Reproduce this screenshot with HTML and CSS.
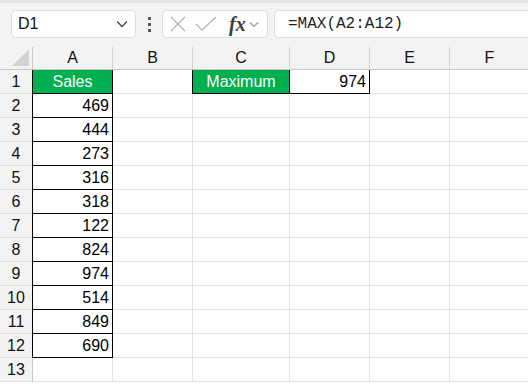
FILE: index.html
```html
<!DOCTYPE html>
<html lang="en">
<head>
    <meta charset="UTF-8">
    <title>Excel - MAX</title>
    <link rel="stylesheet" href="styles.css">
</head>
<body>
    <div class="toolbar">
        <div class="name-box">
            <span>D1</span>
            <svg width="12" height="8" viewBox="0 0 12 8"><path d="M1 1.5 L6 6.5 L11 1.5" fill="none" stroke="#444" stroke-width="1.3"/></svg>
        </div>
        <div class="dots"><i></i><i></i><i></i></div>
        <div class="fx-box">
            <svg width="18" height="18" viewBox="0 0 18 18"><path d="M2 2 L16 16 M16 2 L2 16" stroke="#b4b4b4" stroke-width="1.3"/></svg>
            <svg width="22" height="18" viewBox="0 0 22 18"><path d="M1 9 L7 15 L21 2" fill="none" stroke="#b4b4b4" stroke-width="1.3"/></svg>
            <span class="fx">fx</span>
            <svg width="10" height="7" viewBox="0 0 10 7"><path d="M1 1.5 L5 5.5 L9 1.5" fill="none" stroke="#999" stroke-width="1.2"/></svg>
        </div>
        <div class="formula-box">=MAX(A2:A12)</div>
    </div>

    <div class="sheet">
        <div class="corner"><span class="tri"></span></div>
        <div class="col-head">A</div>
        <div class="col-head">B</div>
        <div class="col-head">C</div>
        <div class="col-head">D</div>
        <div class="col-head">E</div>
        <div class="col-head">F</div>

        <div class="row-head">1</div>
        <div class="cell box head-cell">Sales</div>
        <div class="cell"></div>
        <div class="cell box head-cell">Maximum</div>
        <div class="cell box num">974</div>
        <div class="cell"></div>
        <div class="cell"></div>
    </div>

    <script>
        // rows 2-13
        const sales = [469, 444, 273, 316, 318, 122, 824, 974, 514, 849, 690, null];
        const sheet = document.querySelector('.sheet');
        sales.forEach((v, i) => {
            let html = `<div class="row-head">${i + 2}</div>`;
            html += v === null ? '<div class="cell"></div>' : `<div class="cell box num">${v}</div>`;
            for (let c = 0; c < 5; c++) html += '<div class="cell"></div>';
            sheet.insertAdjacentHTML('beforeend', html);
        });
    </script>
</body>
</html>
```

FILE: styles.css
```css
body {
    margin: 0;
    background: #ffffff;
    font-family: "Liberation Sans", Arial, sans-serif;
    overflow: hidden;
}

.toolbar {
    height: 47px;
    box-sizing: border-box;
    padding: 7px 0 0 11px;
    background: #f3f3f3;
    border-top: 3px solid #e6e6e6;
    display: flex;
    align-items: flex-start;
}

.name-box, .fx-box, .formula-box {
    height: 28px;
    box-sizing: border-box;
    background: #fff;
    border: 1px solid #dcdcdc;
    border-radius: 5px;
    display: flex;
    align-items: center;
}

.name-box {
    width: 125px;
    padding: 0 7px 0 6px;
    justify-content: space-between;
    font-size: 16px;
    color: #111;
}

.dots {
    width: 26px;
    height: 28px;
    display: flex;
    flex-direction: column;
    align-items: center;
    justify-content: center;
    gap: 3px;
}

.dots i {
    width: 3px;
    height: 3px;
    background: #555;
}

.fx-box {
    width: 106px;
    padding: 0 4px 0 6px;
    gap: 8px;
}

.fx {
    font-family: "Liberation Serif", "Times New Roman", serif;
    font-style: italic;
    font-weight: bold;
    font-size: 20px;
    color: #3c3c3c;
    margin-left: 4px;
    margin-right: -5px;
}

.formula-box {
    flex: 1;
    margin-left: 6px;
    padding-left: 13px;
    border-right: none;
    border-radius: 5px 0 0 5px;
    font-family: "Liberation Mono", "Courier New", monospace;
    font-size: 16px;
    color: #1f1f1f;
}

.sheet {
    display: grid;
    grid-template-columns: 33px 80px 80px 97px 80px 80px 80px;
    grid-template-rows: 23px repeat(13, 24px);
    font-size: 16px;
}

.corner, .col-head, .row-head {
    background: #f3f3f3;
    color: #111;
    box-sizing: border-box;
    display: flex;
    align-items: center;
    justify-content: center;
}

.corner {
    border-right: 1px solid #c8c8c8;
    border-bottom: 1px solid #c8c8c8;
    position: relative;
}

.tri {
    position: absolute;
    right: 3px;
    bottom: 3px;
    width: 0;
    height: 0;
    border-left: 17px solid transparent;
    border-bottom: 17px solid #d2d2d2;
}

.col-head {
    border-right: 1px solid #d2d2d2;
    border-bottom: 1px solid #c8c8c8;
}

.row-head {
    border-right: 1px solid #c8c8c8;
    border-bottom: 1px solid #dedede;
}

.cell {
    box-sizing: border-box;
    border-right: 1px solid #e1e1e1;
    border-bottom: 1px solid #e1e1e1;
    padding: 0 3px;
    display: flex;
    align-items: center;
    color: #000;
}

.box {
    border-right-color: #000;
    border-bottom-color: #000;
    box-shadow: -1px 0 0 #000;
}

.head-cell {
    background: #00b050;
    color: #fff;
    justify-content: center;
}

.num {
    justify-content: flex-end;
}
```
